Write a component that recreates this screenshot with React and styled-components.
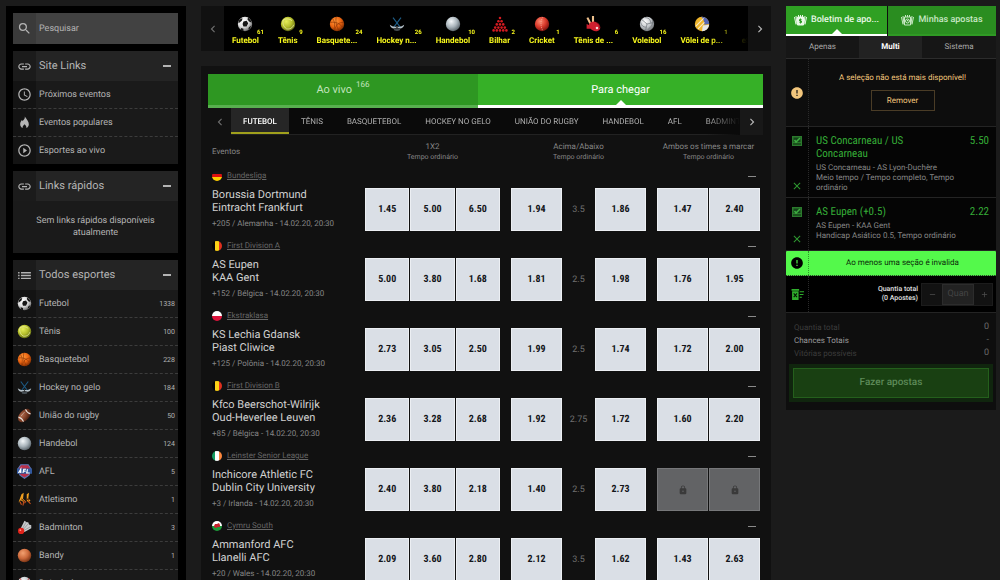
import React from 'react';
import styled, { createGlobalStyle, css } from 'styled-components';
import {
  MdSearch, MdInsertLink, MdAccessTime, MdPlayCircleOutline,
  MdList, MdLock, MdError, MdRemove, MdAdd, MdClose,
  MdChevronLeft, MdChevronRight,
} from 'react-icons/md';

const GlobalStyle = createGlobalStyle`
  * { box-sizing: border-box; }
  body { margin: 0; background: #1b1b1b; color: #b4b4b4; font: 8px/12px Roboto, "Liberation Sans", sans-serif; text-rendering: geometricPrecision; overflow: hidden; }
  button, input { font: inherit; color: inherit; text-rendering: inherit; border: 0; padding: 0; margin: 0; background: none; border-radius: 0; }
  ul { list-style: none; margin: 0; padding: 0; }
  a { color: inherit; text-decoration: none; }
  h2, h3, p { margin: 0; font-weight: 400; }
  svg { display: block; flex: none; }
`;

/* ---------- drawings ---------- */

const Defs = () => (
  <svg width="0" height="0" style={{ position: 'absolute' }} aria-hidden="true">
    <defs>
      {[
        ['soccer', '#ffffff', '#dcdcdc', '#666'],
        ['tennis', '#e6ee5a', '#b3bd2b', '#5d6612'],
        ['basket', '#ff9a3c', '#ea6512', '#7a2a00'],
        ['hand', '#f4f8fa', '#a9b4bb', '#566067'],
        ['bandy', '#f2a070', '#cc6a3c', '#743012'],
        ['cricket', '#ff8a70', '#d8382a', '#75100c'],
        ['volley', '#ffffff', '#c4c8cc', '#6d7276'],
        ['rugby', '#b06a4c', '#7c3c24', '#3e1a0e'],
      ].map(([id, a, b, c]) => (
        <radialGradient key={id} id={id} cx="38%" cy="32%" r="72%">
          <stop offset="0" stopColor={a} />
          <stop offset="0.55" stopColor={b} />
          <stop offset="1" stopColor={c} />
        </radialGradient>
      ))}
    </defs>
  </svg>
);

const drawings = {
  futebol: (
    <>
      <circle cx="10" cy="10" r="9" fill="url(#soccer)" />
      <path d="M8 7l4-1 2 3-2 4-4 0-1-3z M2 6l3-3 2 0-1 3-4 3z M14 2l3 3 1 3-3-1-2-3z M5 15l3 1 0 3-3-1z M15 14l3-2-2 4-2 1z" fill="#161616" />
    </>
  ),
  tenis: (
    <>
      <circle cx="10" cy="10" r="9" fill="url(#tennis)" />
      <path d="M4 5c3-2 8-2 11 1M4 5c-1 4 0 8 4 11M8 16c4 1 8-1 9-5" fill="none" stroke="#eef0a0" strokeWidth="1" />
    </>
  ),
  basquete: (
    <>
      <circle cx="10" cy="10" r="9" fill="url(#basket)" />
      <path d="M2 8c6-1 11 1 15 6M9 1c-1 6 0 12 4 18M4 3c3 3 4 8 2 14M18 8c-5 0-9 2-11 10" fill="none" stroke="#8a3204" strokeWidth="0.8" />
    </>
  ),
  hockey: (
    <>
      <path d="M5 2l9 12M15 2L6 14" stroke="#1d5c86" strokeWidth="1.4" />
      <path d="M1 11c1 5 5 5 8 4l1-2c-4 1-6 0-9-2zM19 11c-1 5-5 5-8 4l-1-2c4 1 6 0 9-2z" fill="#b4c0c8" />
      <ellipse cx="10" cy="17" rx="4" ry="1.6" fill="#454d52" />
    </>
  ),
  rugby: (
    <g transform="rotate(-48 10 10)">
      <ellipse cx="10" cy="10" rx="10.4" ry="6.6" fill="url(#rugby)" />
      <path d="M3 5.5c1.5 3 1.5 6 0 9M17 5.5c-1.5 3-1.5 6 0 9" fill="none" stroke="#e8e2dc" strokeWidth="1.5" />
      <path d="M6 7h8" stroke="#d8ccc4" strokeWidth="0.7" />
    </g>
  ),
  handebol: <circle cx="10" cy="10" r="9" fill="url(#hand)" />,
  afl: (
    <>
      <path d="M5 1h10l4 6-3 8-6 4-6-4-3-8z" fill="#b9304a" stroke="#5a78b8" strokeWidth="1.4" />
      <path d="M0 6h20v7H0z" fill="#31589e" />
      <path d="M2 12l3-5v5M3 10.5h2M8 12l1-5h3M8.5 9.5h3M14 7l-1 5h4" fill="none" stroke="#fff" strokeWidth="1.6" />
    </>
  ),
  atletismo: (
    <>
      <path d="M6 3l3-2-1 8 3 3-3 1-3-2-3 3zM13 3l3-2-1 8 3 2-3 3-2-3z" fill="#f0a020" />
      <path d="M4 13l2 4M9 12l-1 6M12 12l-2 3M15 12l3 4" stroke="#c8501c" strokeWidth="1.5" />
      <path d="M6 9l3 3M13 9l3 2" stroke="#5c2408" strokeWidth="1.4" />
    </>
  ),
  badminton: (
    <>
      <path d="M5 11L10 1l3 2 2 0 1 3 3 1 0 4-9 5z" fill="#c9ccce" />
      <path d="M7 12l5-9M8 13l7-8M9 14l9-5" stroke="#7d8184" strokeWidth="0.8" />
      <circle cx="5.5" cy="14.5" r="4.2" fill="#e2231a" />
      <circle cx="4.5" cy="13.5" r="1.2" fill="#ff8d80" />
    </>
  ),
  bandy: <circle cx="10" cy="10" r="9" fill="url(#bandy)" />,
  beisebol: (
    <>
      <circle cx="10" cy="10" r="9" fill="url(#volley)" />
      <path d="M4 3c3 4 3 10 0 14M16 3c-3 4-3 10 0 14" fill="none" stroke="#c42a2a" strokeWidth="1.2" />
    </>
  ),
  bilhar: (
    <g fill="#d31a20">
      {[[10, 2.5], [8, 6.5], [12, 6.5], [6, 10.5], [10, 10.5], [14, 10.5], [4, 14.5], [8, 14.5], [12, 14.5], [16, 14.5], [2, 18], [6, 18], [10, 18], [14, 18], [18, 18]].map(([x, y]) => (
        <circle key={`${x}-${y}`} cx={x} cy={y} r="1.6" />
      ))}
    </g>
  ),
  cricket: (
    <>
      <circle cx="10" cy="10" r="9" fill="url(#cricket)" />
      <path d="M11 1.5c-3 5-3 11 0 17" fill="none" stroke="#f5b7a8" strokeWidth="0.8" strokeDasharray="1.5 1" />
    </>
  ),
  mesa: (
    <>
      <path d="M3 2l4 8M10 0l0 9" stroke="#eec08c" strokeWidth="2.6" />
      <ellipse cx="12" cy="13" rx="7.5" ry="5.5" transform="rotate(28 12 13)" fill="#cf1f2f" />
      <path d="M2 10l4 2 1 4-5 0z" fill="#cf1f2f" />
      <path d="M14 8c3 1 5 4 4 7" fill="none" stroke="#7c0d18" strokeWidth="1" />
      <circle cx="15" cy="15" r="1.6" fill="#f7d8d8" />
    </>
  ),
  volei: (
    <>
      <circle cx="10" cy="10" r="9" fill="url(#volley)" />
      <path d="M10 10L3 4M10 10l9-2M10 10l-2 9M7 2c5 0 7 2 8 7M2 8c1 4 3 6 7 6M17 5c1 5-2 9-6 12" fill="none" stroke="#6f757a" strokeWidth="0.9" />
    </>
  ),
  praia: (
    <>
      <circle cx="10" cy="10" r="9" fill="#f0b62c" />
      <path d="M9 1a9 9 0 0 1 10 9l-6 1c0-4-1-7-4-10z" fill="#5566b4" />
      <path d="M19 11a9 9 0 0 1-9 8l1-7z" fill="#e4e6ea" />
      <path d="M2 13L12 3M5 16l8-8" stroke="#f7ecd0" strokeWidth="1.3" />
    </>
  ),
};

const SportIcon = ({ name, size = 15 }) => (
  <svg width={size} height={size} viewBox="0 0 20 20" aria-hidden="true">{drawings[name]}</svg>
);

const FlameIcon = ({ size }) => (
  <svg width={size} height={size} viewBox="0 0 24 24" fill="currentColor" aria-hidden="true">
    <path d="M12.5 1c.6 3-.6 4.6-2.2 6.6C9.7 8.3 9 9 8.5 9.8 8.2 9 7.900 8.300 7.300 7.600 5.200 9.800 4 12.300 4 15c0 3.200 1.800 5.900 4.600 7.200-.5-3 1-4.700 3.600-7.200 2.400 2.300 3.700 4.200 3.200 7.200C18.200 20.900 20 18.200 20 15c0-5.200-3.800-8.300-7.500-14z" />
  </svg>
);

const flags = {
  de: <><path d="M0 0h10v4H0z" fill="#151515" /><path d="M0 3h10v4H0z" fill="#d11" /><path d="M0 6h10v4H0z" fill="#ffce00" /></>,
  be: <><path d="M0 0h4v10H0z" fill="#050505" /><path d="M3 0h4v10H3z" fill="#fcd116" /><path d="M7 0h3v10H7z" fill="#e0301e" /></>,
  pl: <><path d="M0 0h10v5H0z" fill="#fff" /><path d="M0 5h10v5H0z" fill="#dc143c" /></>,
  ie: <><path d="M0 0h4v10H0z" fill="#169b62" /><path d="M3 0h4v10H3z" fill="#fff" /><path d="M7 0h3v10H7z" fill="#ff883e" /></>,
  wl: <><path d="M0 0h10v5H0z" fill="#fff" /><path d="M0 5h10v5H0z" fill="#1d9a3a" /><path d="M2 5l1-2 2 0 2-1 1 2 0 2-2 0-2 1-2-1z" fill="#c8202c" /></>,
};

const FlagCircle = styled.svg`
  width: 10px;
  height: 10px;
  border-radius: 50%;
`;

const BetsIcon = ({ kind }) => (
  <svg width="13" height="12" viewBox="0 0 26 24" fill="none" stroke="currentColor" strokeWidth="2" aria-hidden="true">
    <path d="M1 6l3 15M25 6l-3 15M4 4l2 16M22 4l-2 16" />
    <path d="M7 6h12v16H7zM9 2v4M13 2v4M17 2v4" fill={kind === 'slip' ? 'currentColor' : 'none'} />
    {kind === 'slip'
      ? <path d="M13 9v10M15 11h-4v3h4v3h-4" stroke="#2f9e24" />
      : <><circle cx="13" cy="14" r="4" /><path d="M13 12v2h2" /></>}
  </svg>
);

const TickIcon = () => (
  <svg width="10" height="10" viewBox="0 0 20 20" aria-hidden="true">
    <path d="M0 0h20v20H0z" fill="#2b7a2d" />
    <path d="M3 3h14v9H3z" fill="#14431a" />
    <path d="M5 8l3 4 8-8" fill="none" stroke="#3fae41" strokeWidth="3" />
    <path d="M2 16h16" stroke="#0d2a0f" strokeWidth="2" />
  </svg>
);

const ClearIcon = () => (
  <svg width="13" height="13" viewBox="0 0 24 24" aria-hidden="true">
    <path d="M1 2h14v3H1zM2 6h12v16H2z" fill="#2fae2c" />
    <path d="M5 10l6 7M11 10l-6 7" stroke="#041504" strokeWidth="2" />
    <path d="M16 7h8M16 12h7M16 17h4" stroke="#2fae2c" strokeWidth="2" />
  </svg>
);

/* ---------- page ---------- */

const Page = styled.div`
  display: grid;
  grid-template-columns: 180px minmax(0, 1fr) 210px;
  column-gap: 15px;
  align-items: start;
  height: 100vh;
  padding: 6px 4px 0 6px;
  overflow: hidden;
`;

/* ---------- left menu ---------- */

const Sidebar = styled.aside`
  display: flex;
  flex-direction: column;
  gap: 7px;
  padding: 7px 8px 7px 7px;
  background: #000;
  font-size: 9px;
`;

const SearchBox = styled.label`
  display: flex;
  height: 31px;
  background: #424242;
`;

const IconCell = styled.span`
  display: flex;
  flex: none;
  align-items: center;
  justify-content: center;
  width: 23px;
  background: ${({ $bg }) => $bg || '#131313'};
`;

const SearchInput = styled.input`
  flex: 1;
  min-width: 0;
  padding-left: 3px;
  outline: 0;
  &::placeholder { color: #b4b4b4; opacity: 1; }
`;

const Group = styled.section`
  background: #1a1a1a;
`;

const GroupHead = styled.button`
  display: flex;
  width: 100%;
  height: 30px;
  background: #242424;
  font-size: 11px;
  line-height: 14px;
  text-align: left;
`;

const GroupTitle = styled.span`
  flex: 1;
  align-self: center;
  padding-left: 3px;
`;

const Dash = styled.span`
  align-self: center;
  width: 8px;
  height: ${({ $thin }) => ($thin ? '1px' : '2px')};
  margin-right: ${({ $thin }) => ($thin ? '4px' : '7px')};
  background: ${({ $thin }) => ($thin ? '#8a8a8a' : '#b4b4b4')};
`;

const MenuItem = styled.li`
  & + & { border-top: 1px dashed #3c3c3c; }
`;

const MenuRow = styled.a`
  display: flex;
  height: 27px;
`;

const MenuLabel = styled.span`
  flex: 1;
  align-self: center;
  padding-left: 3px;
`;

const MenuCount = styled.span`
  align-self: center;
  padding-right: 3px;
  font-size: 7px;
`;

const EmptyNote = styled.p`
  padding: 14px 20px;
  text-align: center;
`;

const sports = [
  ['futebol', 'Futebol', 1338], ['tenis', 'Tênis', 100], ['basquete', 'Basquetebol', 228],
  ['hockey', 'Hockey no gelo', 184], ['rugby', 'União do rugby', 50], ['handebol', 'Handebol', 124],
  ['afl', 'AFL', 5], ['atletismo', 'Atletismo', 1], ['badminton', 'Badminton', 3], ['bandy', 'Bandy', 1],
  ['beisebol', 'Beisebol', 9],
];

const MenuGroup = ({ icon, title, children }) => (
  <Group>
    <GroupHead type="button">
      <IconCell $bg="#1b1b1b">{icon}</IconCell>
      <GroupTitle>{title}</GroupTitle>
      <Dash />
    </GroupHead>
    {children}
  </Group>
);

const LeftMenu = () => (
  <Sidebar>
    <SearchBox>
      <IconCell $bg="#3a3a3a"><MdSearch size={15} /></IconCell>
      <SearchInput type="text" placeholder="Pesquisar" aria-label="Pesquisar" />
    </SearchBox>
    <MenuGroup icon={<MdInsertLink size={15} />} title="Site Links">
      <ul>
        {[[MdAccessTime, 'Próximos eventos'], [FlameIcon, 'Eventos populares'], [MdPlayCircleOutline, 'Esportes ao vivo']].map(([Icon, label]) => (
          <MenuItem key={label}>
            <MenuRow href="#">
              <IconCell><Icon size={Icon === FlameIcon ? 13 : 15} /></IconCell>
              <MenuLabel>{label}</MenuLabel>
            </MenuRow>
          </MenuItem>
        ))}
      </ul>
    </MenuGroup>
    <MenuGroup icon={<MdInsertLink size={15} />} title="Links rápidos">
      <EmptyNote>Sem links rápidos disponíveis atualmente</EmptyNote>
    </MenuGroup>
    <MenuGroup icon={<MdList size={17} />} title="Todos esportes">
      <ul>
        {sports.map(([icon, label, count]) => (
          <MenuItem key={label}>
            <MenuRow href="#">
              <IconCell><SportIcon name={icon} /></IconCell>
              <MenuLabel>{label}</MenuLabel>
              <MenuCount>{count}</MenuCount>
            </MenuRow>
          </MenuItem>
        ))}
      </ul>
    </MenuGroup>
  </Sidebar>
);

/* ---------- sport ribbon ---------- */

const Main = styled.main`
  display: flex;
  flex-direction: column;
  gap: 15px;
  min-width: 0;
`;

const Ribbon = styled.nav`
  display: flex;
  height: 45px;
  background: #000;
`;

const Arrow = styled.button`
  display: flex;
  flex: none;
  align-items: center;
  justify-content: center;
  width: 23px;
  background: ${({ $bg }) => $bg || '#111'};
  color: ${({ $dim }) => ($dim ? '#6e6e6e' : '#b8b8b8')};
`;

const RibbonItems = styled.div`
  display: flex;
  flex: 1;
  gap: 19px;
  min-width: 0;
  padding-left: 8px;
  overflow: hidden;
  mask-image: linear-gradient(to right, #000 calc(100% - 40px), transparent);
`;

const RibbonItem = styled.a`
  position: relative;
  display: flex;
  flex: none;
  flex-direction: column;
  align-items: center;
  gap: 3px;
  padding-top: 10px;
  color: #f7f71c;
  font-weight: 700;
  white-space: nowrap;
`;

const RibbonCount = styled.sup`
  position: absolute;
  top: 22px;
  right: -5px;
  font-size: 6px;
  line-height: 10px;
`;

const ribbon = [
  ['futebol', 'Futebol', 61], ['tenis', 'Tênis', 9], ['basquete', 'Basquete...', 24],
  ['hockey', 'Hockey n...', 26], ['handebol', 'Handebol', 10], ['bilhar', 'Bilhar', 2],
  ['cricket', 'Cricket', 1], ['mesa', 'Tênis de ...', 6], ['volei', 'Voleibol', 16],
  ['praia', 'Vôlei de p...', 1], ['none', 'eSports', 8],
];

const SportRibbon = () => (
  <Ribbon>
    <Arrow type="button" aria-label="Anterior" $dim><MdChevronLeft size={14} /></Arrow>
    <RibbonItems>
      {ribbon.map(([icon, label, count]) => (
        <RibbonItem key={label} href="#">
          <SportIcon name={icon} size={16} />
          {label}
          <RibbonCount>{count}</RibbonCount>
        </RibbonItem>
      ))}
    </RibbonItems>
    <Arrow type="button" aria-label="Próximo"><MdChevronRight size={14} /></Arrow>
  </Ribbon>
);

/* ---------- event board ---------- */

const Board = styled.section`
  padding: 8px 8px 0 7px;
  background: #111;
`;

const pointer = css`
  &::after {
    content: '';
    position: absolute;
    left: 50%;
    bottom: 0;
    border: 5px solid transparent;
    border-top-width: 0;
    border-bottom-color: #fff;
    transform: translateX(-50%);
  }
`;

const PhaseTabs = styled.div`
  display: grid;
  grid-template-columns: 18fr 19fr;
`;

const PhaseTab = styled.button`
  position: relative;
  height: 34px;
  font-size: 11px;
  line-height: 14px;
  color: ${({ $active }) => ($active ? '#fff' : '#c2e4be')};
  background: ${({ $active }) => ($active ? '#36b027' : '#2e9722')};
  border-bottom: 3px solid ${({ $active }) => ($active ? '#fff' : '#58b04f')};
  ${({ $active }) => $active && pointer}
`;

const PhaseCount = styled.sup`
  margin-left: 4px;
  font-size: 8px;
  line-height: 0;
  vertical-align: 6px;
`;

const SportTabs = styled.nav`
  display: flex;
  height: 27px;
  background: #0a0a0a;
`;

const SportTabList = styled.div`
  display: flex;
  flex: 1;
  min-width: 0;
  overflow: hidden;
  border-bottom: 1px solid #222;
  mask-image: linear-gradient(to right, #000 calc(100% - 34px), transparent);
`;

const SportTab = styled.button`
  flex: none;
  padding: 3px 12px 0;
  white-space: nowrap;
  text-transform: uppercase;
  color: ${({ $active }) => ($active ? '#fff' : '#b0b0b0')};
  font-weight: ${({ $active }) => ($active ? 500 : 400)};
  background: ${({ $active }) => ($active ? '#262626' : 'none')};
  border-bottom: 2px solid ${({ $active }) => ($active ? '#a0a01c' : 'transparent')};
`;

const columns = css`
  display: grid;
  grid-template-columns: 142fr 135fr 135fr 103fr;
  column-gap: 11px;
`;

const BoardHead = styled.div`
  ${columns}
  align-items: center;
  height: 33px;
  padding: 0 3px 0 4px;
  color: #868686;
  line-height: 10px;
`;

const MarketHead = styled.div`
  text-align: center;
  white-space: nowrap;
`;

const MarketPeriod = styled.div`
  font-size: 7px;
`;

const EventBlock = styled.article`
  height: 70px;
  padding: 0 3px 0 4px;
`;

const LeagueRow = styled.div`
  display: flex;
  align-items: center;
  gap: 5px;
  height: 16px;
  margin-bottom: 4px;
  color: #666;
`;

const LeagueLink = styled.a`
  text-decoration: underline;
`;

const Toggle = styled.button`
  display: flex;
  margin-left: auto;
  padding: 6px 0;
`;

const EventBody = styled.div`
  ${columns}
  height: 43px;
`;

const EventInfo = styled.div`
  white-space: nowrap;
`;

const Teams = styled.h3`
  margin-bottom: 4px;
  color: #d2d2d2;
  font-size: 11px;
  line-height: 13px;
`;

const Meta = styled.p`
  color: #868686;
`;

const Market = styled.div`
  display: grid;
  grid-template-columns: ${({ $cols }) => $cols};
  column-gap: 1px;
`;

const Odd = styled.button`
  display: flex;
  align-items: center;
  justify-content: center;
  background: #dadfe6;
  border: 1px solid #eceff3;
  color: #14161a;
  font-family: "Roboto Condensed", Roboto, sans-serif;
  font-size: 10px;
  font-weight: 700;
  &:disabled { background: #626365; border-color: #77787a; color: #3a3a3a; }
`;

const Line = styled.span`
  align-self: center;
  text-align: center;
  color: #707070;
  font-size: 9px;
`;

const events = [
  ['de', 'Bundesliga', 'Borussia Dortmund', 'Eintracht Frankfurt', '+205 / Alemanha - 14.02.20, 20:30', ['1.45', '5.00', '6.50'], ['1.94', '3.5', '1.86'], ['1.47', '2.40']],
  ['be', 'First Division A', 'AS Eupen', 'KAA Gent', '+152 / Bélgica - 14.02.20, 20:30', ['5.00', '3.80', '1.68'], ['1.81', '2.5', '1.98'], ['1.76', '1.95']],
  ['pl', 'Ekstraklasa', 'KS Lechia Gdansk', 'Piast Cliwice', '+125 / Polônia - 14.02.20, 20:30', ['2.73', '3.05', '2.50'], ['1.99', '2.5', '1.74'], ['1.72', '2.00']],
  ['be', 'First Division B', 'Kfco Beerschot-Wilrijk', 'Oud-Heverlee Leuven', '+85 / Bélgica - 14.02.20, 20:30', ['2.36', '3.28', '2.68'], ['1.92', '2.75', '1.72'], ['1.60', '2.20']],
  ['ie', 'Leinster Senior League', 'Inchicore Athletic FC', 'Dublin City University', '+3 / Irlanda - 14.02.20, 20:30', ['2.40', '3.80', '2.18'], ['1.40', '2.5', '2.73'], [null, null]],
  ['wl', 'Cymru South', 'Ammanford AFC', 'Llanelli AFC', '+20 / Wales - 14.02.20, 20:30', ['2.09', '3.60', '2.80'], ['2.12', '3.5', '1.62'], ['1.43', '2.63']],
];

const EventBoard = () => (
  <Board>
    <PhaseTabs>
      <PhaseTab type="button">Ao vivo<PhaseCount>166</PhaseCount></PhaseTab>
      <PhaseTab type="button" $active>Para chegar</PhaseTab>
    </PhaseTabs>
    <SportTabs>
      <Arrow type="button" aria-label="Anterior" $dim><MdChevronLeft size={14} /></Arrow>
      <SportTabList>
        {['Futebol', 'Tênis', 'Basquetebol', 'Hockey no gelo', 'União do rugby', 'Handebol', 'AFL', 'Badminton'].map((name, i) => (
          <SportTab key={name} type="button" $active={i === 0}>{name}</SportTab>
        ))}
      </SportTabList>
      <Arrow type="button" aria-label="Próximo" $bg="#181818"><MdChevronRight size={14} /></Arrow>
    </SportTabs>
    <BoardHead>
      <div>Eventos</div>
      {['1X2', 'Acima/Abaixo', 'Ambos os times a marcar'].map((market) => (
        <MarketHead key={market}>{market}<MarketPeriod>Tempo ordinário</MarketPeriod></MarketHead>
      ))}
    </BoardHead>
    {events.map(([flag, league, home, away, meta, result, total, both]) => (
      <EventBlock key={league}>
        <LeagueRow>
          <FlagCircle viewBox="0 0 10 10" aria-hidden="true">{flags[flag]}</FlagCircle>
          <LeagueLink href="#">{league}</LeagueLink>
          <Toggle type="button" aria-label="Recolher"><Dash $thin /></Toggle>
        </LeagueRow>
        <EventBody>
          <EventInfo>
            <Teams>{home}<br />{away}</Teams>
            <Meta>{meta}</Meta>
          </EventInfo>
          <Market $cols="repeat(3, 1fr)">
            {result.map((odd) => <Odd key={odd} type="button">{odd}</Odd>)}
          </Market>
          <Market $cols="51fr 31fr 51fr">
            <Odd type="button">{total[0]}</Odd>
            <Line>{total[1]}</Line>
            <Odd type="button">{total[2]}</Odd>
          </Market>
          <Market $cols="1fr 1fr">
            {both.map((odd, i) => (
              <Odd key={i} type="button" disabled={!odd} aria-label={odd ? undefined : 'Bloqueado'}>
                {odd || <MdLock size={10} />}
              </Odd>
            ))}
          </Market>
        </EventBody>
      </EventBlock>
    ))}
  </Board>
);

/* ---------- bet slip ---------- */

const Slip = styled.aside`
  padding-bottom: 8px;
  background: #0e0e0e;
`;

const SlipTabs = styled.div`
  display: grid;
  grid-template-columns: 101fr 108fr;
  column-gap: 1px;
`;

const SlipTab = styled.button`
  position: relative;
  display: flex;
  align-items: center;
  justify-content: center;
  gap: 4px;
  height: 30px;
  background: ${({ $active }) => ($active ? '#2fa023' : '#2a8d20')};
  border-bottom: 2px solid ${({ $active }) => ($active ? '#fff' : '#2f9a24')};
  color: ${({ $active }) => ($active ? '#e9f8e7' : '#c8e8c4')};
  font-size: 9px;
  font-weight: 500;
  white-space: nowrap;
  ${({ $active }) => $active && pointer}
`;

const TypeTabs = styled.div`
  display: grid;
  grid-template-columns: 73fr 63fr 74fr;
  height: 23px;
  border-bottom: 1px solid #2c2c2c;
  background: #161616;
`;

const TypeTab = styled.button`
  color: ${({ $active }) => ($active ? '#fff' : '#a8a8a8')};
  background: ${({ $active }) => ($active ? '#222' : 'none')};
  font-weight: ${({ $active }) => ($active ? 700 : 400)};
`;

const SlipRow = styled.div`
  display: grid;
  grid-template-columns: 23px minmax(0, 1fr);
  border-bottom: 1px ${({ $dotted }) => ($dotted ? 'dotted' : 'solid')} #242424;
  background: ${({ $bg }) => $bg || '#050505'};
  color: ${({ $color }) => $color || '#868686'};
`;

const SlipSide = styled.div`
  display: flex;
  flex-direction: column;
  align-items: center;
  justify-content: ${({ $spread }) => ($spread ? 'space-between' : 'center')};
  padding: ${({ $spread }) => ($spread ? '9px 0 5px' : '0')};
  border-right: 1px dotted ${({ $line }) => $line || '#2a2a2a'};
`;

const Notice = styled.div`
  display: flex;
  flex-direction: column;
  align-items: center;
  gap: 6px;
  padding: 13px 0 15px;
`;

const RemoveButton = styled.button`
  width: 64px;
  height: 21px;
  border: 1px solid #4a3c26;
`;

const RemoveBet = styled.button`
  color: #2f9a31;
`;

const Bet = styled.div`
  display: flex;
  justify-content: space-between;
  min-height: 52px;
  padding: 7px 7px 4px;
  line-height: 10px;
`;

const BetText = styled.div`
  width: 148px;
`;

const BetTitle = styled.h3`
  max-width: 130px;
  margin-bottom: 3px;
  color: #35ad37;
  font-family: "Roboto Condensed", Roboto, sans-serif;
  font-size: 11px;
  line-height: 13px;
`;

const Banner = styled(SlipRow)`
  height: 25px;
  border-radius: 1px;
`;

const BannerText = styled.p`
  align-self: center;
  text-align: center;
`;

const AmountRow = styled.div`
  display: flex;
  align-items: center;
  justify-content: flex-end;
  gap: 3px;
  height: 36px;
  padding-right: 3px;
`;

const AmountLabel = styled.label`
  color: #e0e0e0;
  font-size: 7px;
  font-weight: 500;
  line-height: 9px;
  text-align: right;
  white-space: pre-line;
`;

const Stepper = styled.div`
  display: grid;
  grid-template-columns: 20px 32px 20px;
  height: 23px;
  background: #121212;
  border: 1px solid #1c1c1c;
  width: 72px;
`;

const StepButton = styled.button`
  display: flex;
  align-items: center;
  justify-content: center;
  color: #4e4e4e;
`;

const AmountInput = styled.input`
  min-width: 0;
  background: #222;
  border: 1px solid #2c2c2c;
  text-align: center;
  font-size: 9px;
  &::placeholder { color: #444; opacity: 1; }
`;

const Totals = styled.dl`
  margin: 0;
  padding: 8px 7px 4px 8px;
`;

const TotalRow = styled.div`
  display: flex;
  justify-content: space-between;
  height: 13px;
  line-height: 13px;
  color: ${({ $bright }) => ($bright ? '#9a9a9a' : '#3c3c3c')};
  dd { margin: 0; color: #6a6a6a; font-size: 9px; }
`;

const PlaceWrap = styled.div`
  margin: 0 3px;
  padding: 4px;
  background: #10250e;
`;

const PlaceButton = styled.button`
  width: 100%;
  height: 30px;
  background: #194012;
  border: 1px solid #245f1c;
  color: #5d8a58;
  font-size: 10px;
  font-weight: 500;
`;

const bets = [
  ['US Concarneau / US Concarneau', '5.50', 'US Concarneau - AS Lyon-Duchère', 'Meio tempo / Tempo completo, Tempo ordinário'],
  ['AS Eupen (+0.5)', '2.22', 'AS Eupen - KAA Gent', 'Handicap Asiático 0.5, Tempo ordinário'],
];

const BetSlip = () => (
  <Slip>
    <SlipTabs>
      <SlipTab type="button" $active><BetsIcon kind="slip" />Boletim de apo...</SlipTab>
      <SlipTab type="button"><BetsIcon kind="mine" />Minhas apostas</SlipTab>
    </SlipTabs>
    <TypeTabs>
      <TypeTab type="button">Apenas</TypeTab>
      <TypeTab type="button" $active>Multi</TypeTab>
      <TypeTab type="button">Sistema</TypeTab>
    </TypeTabs>
    <SlipRow $bg="#0d0d0d" $color="#f2c67c">
      <SlipSide><MdError size={14} /></SlipSide>
      <Notice>
        <p>A seleção não está mais disponível!</p>
        <RemoveButton type="button">Remover</RemoveButton>
      </Notice>
    </SlipRow>
    {bets.map(([title, odd, match, market]) => (
      <SlipRow key={title}>
        <SlipSide $spread>
          <TickIcon />
          <RemoveBet type="button" aria-label="Remover aposta"><MdClose size={12} /></RemoveBet>
        </SlipSide>
        <Bet>
          <BetText>
            <BetTitle>{title}</BetTitle>
            <p>{match}</p>
            <p>{market}</p>
          </BetText>
          <BetTitle as="span">{odd}</BetTitle>
        </Bet>
      </SlipRow>
    ))}
    <Banner $bg="#54f94b" $color="#0b2a0a" $dotted>
      <SlipSide $line="#2e9a2a"><MdError size={14} color="#000" /></SlipSide>
      <BannerText>Ao menos uma seção é invalida</BannerText>
    </Banner>
    <SlipRow $bg="#000">
      <SlipSide><ClearIcon /></SlipSide>
      <AmountRow>
        <AmountLabel htmlFor="amount">{'Quantia total\n(0 Apostes)'}</AmountLabel>
        <Stepper>
          <StepButton type="button" aria-label="Diminuir"><MdRemove size={9} /></StepButton>
          <AmountInput id="amount" type="text" placeholder="Quan" />
          <StepButton type="button" aria-label="Aumentar"><MdAdd size={9} /></StepButton>
        </Stepper>
      </AmountRow>
    </SlipRow>
    <Totals>
      <TotalRow><dt>Quantia total</dt><dd>0</dd></TotalRow>
      <TotalRow $bright><dt>Chances Totais</dt><dd>-</dd></TotalRow>
      <TotalRow><dt>Vitórias possíveis</dt><dd>0</dd></TotalRow>
    </Totals>
    <PlaceWrap><PlaceButton type="button">Fazer apostas</PlaceButton></PlaceWrap>
  </Slip>
);

export default function App() {
  return (
    <>
      <GlobalStyle />
      <Defs />
      <Page>
        <LeftMenu />
        <Main>
          <SportRibbon />
          <EventBoard />
        </Main>
        <BetSlip />
      </Page>
    </>
  );
}
